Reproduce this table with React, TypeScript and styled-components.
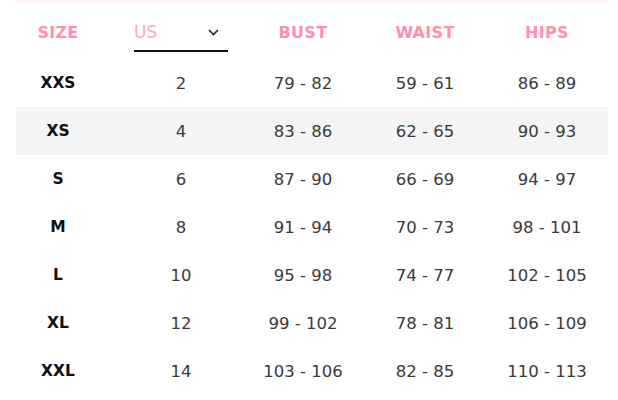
import React from "react";
import styled, { createGlobalStyle } from "styled-components";

const Global = createGlobalStyle`
  html, body { margin: 0; padding: 0; background: #fff; }
  body { font-family: "DejaVu Sans", sans-serif; }
`;

const Wrap = styled.div`
  width: 592px;
  margin-left: 16px;
`;

const TopStrip = styled.div`
  height: 3px;
  background: #fdf3f1;
`;

const Row = styled.div<{ $shade?: boolean; $h: number }>`
  display: grid;
  grid-template-columns: 84px 162px 82px 162px 82px 1fr;
  align-items: center;
  height: ${(p) => p.$h}px;
  background: ${(p) => (p.$shade ? "#f4f4f4" : "transparent")};
`;

const HeadCell = styled.div`
  text-align: center;
  font-family: "DejaVu Sans", sans-serif;
  font-weight: 700;
  font-size: 16px;
  color: #ff91ad;
  letter-spacing: 0.3px;
  padding-top: 2px;
`;

const SizeCell = styled.div`
  text-align: center;
  font-family: "DejaVu Sans", sans-serif;
  font-weight: 700;
  font-size: 15.5px;
  color: #111;
`;

const Cell = styled.div`
  text-align: center;
  font-family: "DejaVu Sans", sans-serif;
  font-size: 16.5px;
  color: #3a3a3a;
`;

const SelectBox = styled.div`
  justify-self: center;
  width: 94px;
  height: 33px;
  box-sizing: border-box;
  border-bottom: 2px solid #111;
  display: flex;
  align-items: flex-start;
  justify-content: space-between;
  margin-top: 8px;
`;

const SelectLabel = styled.span`
  font-family: "DejaVu Sans", sans-serif;
  font-weight: 400;
  font-size: 17px;
  color: #ffa8be;
  line-height: 20px;
  margin-top: 3px;
`;

const Chevron = styled.svg`
  margin: 10px 9px 0 0;
`;

const rows = [
  ["XXS", "2", "79 - 82", "59 - 61", "86 - 89"],
  ["XS", "4", "83 - 86", "62 - 65", "90 - 93"],
  ["S", "6", "87 - 90", "66 - 69", "94 - 97"],
  ["M", "8", "91 - 94", "70 - 73", "98 - 101"],
  ["L", "10", "95 - 98", "74 - 77", "102 - 105"],
  ["XL", "12", "99 - 102", "78 - 81", "106 - 109"],
  ["XXL", "14", "103 - 106", "82 - 85", "110 - 113"],
];

export default function App() {
  return (
    <>
      <Global />
      <Wrap>
        <TopStrip />
        <Row $h={56}>
          <HeadCell>SIZE</HeadCell>
          <SelectBox>
            <SelectLabel>US</SelectLabel>
            <Chevron width="11" height="7" viewBox="0 0 11 7">
              <path d="M1 1l4.5 4.5L10 1" fill="none" stroke="#222" strokeWidth="1.6" />
            </Chevron>
          </SelectBox>
          <HeadCell>BUST</HeadCell>
          <HeadCell>WAIST</HeadCell>
          <HeadCell>HIPS</HeadCell>
        </Row>
        {rows.map((r, i) => (
          <Row key={r[0]} $h={48} $shade={i === 1}>
            <SizeCell>{r[0]}</SizeCell>
            <Cell>{r[1]}</Cell>
            <Cell>{r[2]}</Cell>
            <Cell>{r[3]}</Cell>
            <Cell>{r[4]}</Cell>
          </Row>
        ))}
      </Wrap>
    </>
  );
}
